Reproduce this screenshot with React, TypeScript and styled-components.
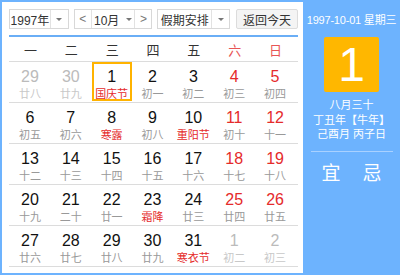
import React from 'react';
import styled, { createGlobalStyle } from 'styled-components';

const GlobalStyle = createGlobalStyle`
  html, body {
    margin: 0;
    padding: 0;
    background: #ffffff;
    font-family: "Liberation Sans", "Noto Sans CJK SC", sans-serif;
  }
`;

const BLUE = '#6db3fe';
const RED = '#e52b2b';

const Widget = styled.div`
  display: flex;
  width: 400px;
  height: 275px;
  box-sizing: border-box;
  border: 2px solid ${BLUE};
  border-right: none;
  overflow: hidden;
`;

const Main = styled.div`
  width: 301px;
  flex-shrink: 0;
  box-sizing: border-box;
  padding: 7px 5px 0 7px;
  background: #ffffff;
`;

const Toolbar = styled.div`
  display: flex;
  align-items: center;
  height: 20px;
  padding-bottom: 6px;
  border-bottom: 2px solid #6aaef6;
  gap: 5px;
`;

const SelectBox = styled.div<{ $w: number }>`
  display: flex;
  width: ${(p) => p.$w}px;
  height: 20px;
  box-sizing: border-box;
  border: 1px solid #d8d8d8;
  background: #fff;
  font-size: 12px;
  color: #333;
`;

const SelectText = styled.div`
  flex: 1;
  display: flex;
  align-items: center;
  justify-content: center;
  border-right: 1px solid #e2e2e2;
`;

const Arrow = styled.div`
  width: 17px;
  display: flex;
  align-items: center;
  justify-content: center;
  &::after {
    content: '';
    border-left: 3px solid transparent;
    border-right: 3px solid transparent;
    border-top: 3px solid #777;
  }
`;

const InlineArrow = styled.span`
  display: inline-block;
  margin-left: 7px;
  border-left: 3px solid transparent;
  border-right: 3px solid transparent;
  border-top: 3px solid #777;
`;

const NavBtn = styled.div<{ $side: 'l' | 'r' }>`
  width: 16px;
  display: flex;
  align-items: center;
  justify-content: center;
  color: #777;
  ${(p) => (p.$side === 'l' ? 'border-right' : 'border-left')}: 1px solid #e2e2e2;
`;

const MonthText = styled.div`
  flex: 1;
  display: flex;
  align-items: center;
  justify-content: center;
`;

const TodayButton = styled.div`
  width: 62px;
  height: 20px;
  box-sizing: border-box;
  border: 1px solid #dcdcdc;
  border-radius: 2px;
  background: #f4f4f4;
  font-size: 12px;
  color: #333;
  display: flex;
  align-items: center;
  justify-content: center;
  margin-left: 1px;
`;

const Grid = styled.div`
  display: grid;
  grid-template-columns: repeat(7, 1fr);
  padding: 0 2px 0 1px;
`;

const WeekHead = styled.div<{ $weekend?: boolean }>`
  height: 24px;
  display: flex;
  align-items: center;
  justify-content: center;
  font-size: 13px;
  color: ${(p) => (p.$weekend ? '#e85555' : '#333')};
  border-bottom: 1px solid #dcdcdc;
  margin: 0 -2px 0 -1px;
  padding: 0 2px 0 1px;
`;

const Cell = styled.div`
  height: 40px;
  border-bottom: 1px solid #dcdcdc;
  margin: 0 -2px 0 -1px;
  padding: 0 2px 0 1px;
  display: flex;
  align-items: stretch;
  justify-content: center;
`;

const CellInner = styled.div<{ $today?: boolean }>`
  flex: 1;
  box-sizing: border-box;
  margin: 0 1px 1px 0;
  border: 2px solid ${(p) => (p.$today ? '#ffb300' : 'transparent')};
  display: flex;
  flex-direction: column;
  align-items: center;
  padding-top: 3px;
`;

const DayNum = styled.div<{ $tone: 'normal' | 'weekend' | 'other' }>`
  font-size: 16px;
  line-height: 20px;
  color: ${(p) => (p.$tone === 'weekend' ? RED : p.$tone === 'other' ? '#bbbbbb' : '#111')};
`;

const Lunar = styled.div<{ $tone: 'normal' | 'festival' | 'other' }>`
  font-size: 11px;
  line-height: 14px;
  color: ${(p) => (p.$tone === 'festival' ? RED : p.$tone === 'other' ? '#c8c8c8' : '#999')};
`;

const Side = styled.div`
  flex: 1;
  min-width: 0;
  background: ${BLUE};
  color: #fff;
  display: flex;
  flex-direction: column;
  align-items: center;
  padding-top: 11px;
`;

const DateLine = styled.div`
  font-size: 11px;
  line-height: 14px;
  white-space: nowrap;
  letter-spacing: -0.2px;
`;

const BigDay = styled.div`
  margin-top: 10px;
  width: 55px;
  height: 55px;
  border-radius: 2px;
  background: #ffb700;
  font-size: 48px;
  display: flex;
  align-items: center;
  justify-content: center;
`;

const LunarInfo = styled.div`
  margin-top: 6px;
  font-size: 11px;
  line-height: 14.5px;
  text-align: center;
  white-space: nowrap;
`;

const Divider = styled.div`
  width: 82px;
  height: 1px;
  background: #a9d1ff;
  margin-top: 9px;
`;

const Advice = styled.div`
  display: flex;
  gap: 22px;
  margin-top: 6px;
  font-size: 19px;
`;

type Day = { d: number; l: string; other?: boolean; fest?: boolean };

const days: Day[] = [
  { d: 29, l: '廿八', other: true }, { d: 30, l: '廿九', other: true }, { d: 1, l: '国庆节', fest: true },
  { d: 2, l: '初一' }, { d: 3, l: '初二' }, { d: 4, l: '初三' }, { d: 5, l: '初四' },
  { d: 6, l: '初五' }, { d: 7, l: '初六' }, { d: 8, l: '寒露', fest: true }, { d: 9, l: '初八' },
  { d: 10, l: '重阳节', fest: true }, { d: 11, l: '初十' }, { d: 12, l: '十一' },
  { d: 13, l: '十二' }, { d: 14, l: '十三' }, { d: 15, l: '十四' }, { d: 16, l: '十五' },
  { d: 17, l: '十六' }, { d: 18, l: '十七' }, { d: 19, l: '十八' },
  { d: 20, l: '十九' }, { d: 21, l: '二十' }, { d: 22, l: '廿一' }, { d: 23, l: '霜降', fest: true },
  { d: 24, l: '廿三' }, { d: 25, l: '廿四' }, { d: 26, l: '廿五' },
  { d: 27, l: '廿六' }, { d: 28, l: '廿七' }, { d: 29, l: '廿八' }, { d: 30, l: '廿九' },
  { d: 31, l: '寒衣节', fest: true }, { d: 1, l: '初二', other: true }, { d: 2, l: '初三', other: true },
];

const weekNames = ['一', '二', '三', '四', '五', '六', '日'];

export default function App() {
  return (
    <>
      <GlobalStyle />
      <Widget>
        <Main>
          <Toolbar>
            <SelectBox $w={60}>
              <SelectText>1997年</SelectText>
              <Arrow />
            </SelectBox>
            <SelectBox $w={79}>
              <NavBtn $side="l">&lt;</NavBtn>
              <MonthText>
                10月<InlineArrow />
              </MonthText>
              <NavBtn $side="r">&gt;</NavBtn>
            </SelectBox>
            <SelectBox $w={73}>
              <SelectText>假期安排</SelectText>
              <Arrow />
            </SelectBox>
            <TodayButton>返回今天</TodayButton>
          </Toolbar>
          <Grid>
            {weekNames.map((w, i) => (
              <WeekHead key={w} $weekend={i >= 5}>{w}</WeekHead>
            ))}
            {days.map((day, i) => {
              const col = i % 7;
              const today = i === 2;
              const numTone = day.other ? 'other' : col >= 5 ? 'weekend' : 'normal';
              const lunarTone = day.other ? 'other' : day.fest ? 'festival' : 'normal';
              return (
                <Cell key={i}>
                  <CellInner $today={today}>
                    <DayNum $tone={numTone}>{day.d}</DayNum>
                    <Lunar $tone={lunarTone}>{day.l}</Lunar>
                  </CellInner>
                </Cell>
              );
            })}
          </Grid>
        </Main>
        <Side>
          <DateLine>1997-10-01 星期三</DateLine>
          <BigDay>1</BigDay>
          <LunarInfo>
            八月三十
            <br />
            丁丑年【牛年】
            <br />
            己酉月 丙子日
          </LunarInfo>
          <Divider />
          <Advice>
            <span>宜</span>
            <span>忌</span>
          </Advice>
        </Side>
      </Widget>
    </>
  );
}
